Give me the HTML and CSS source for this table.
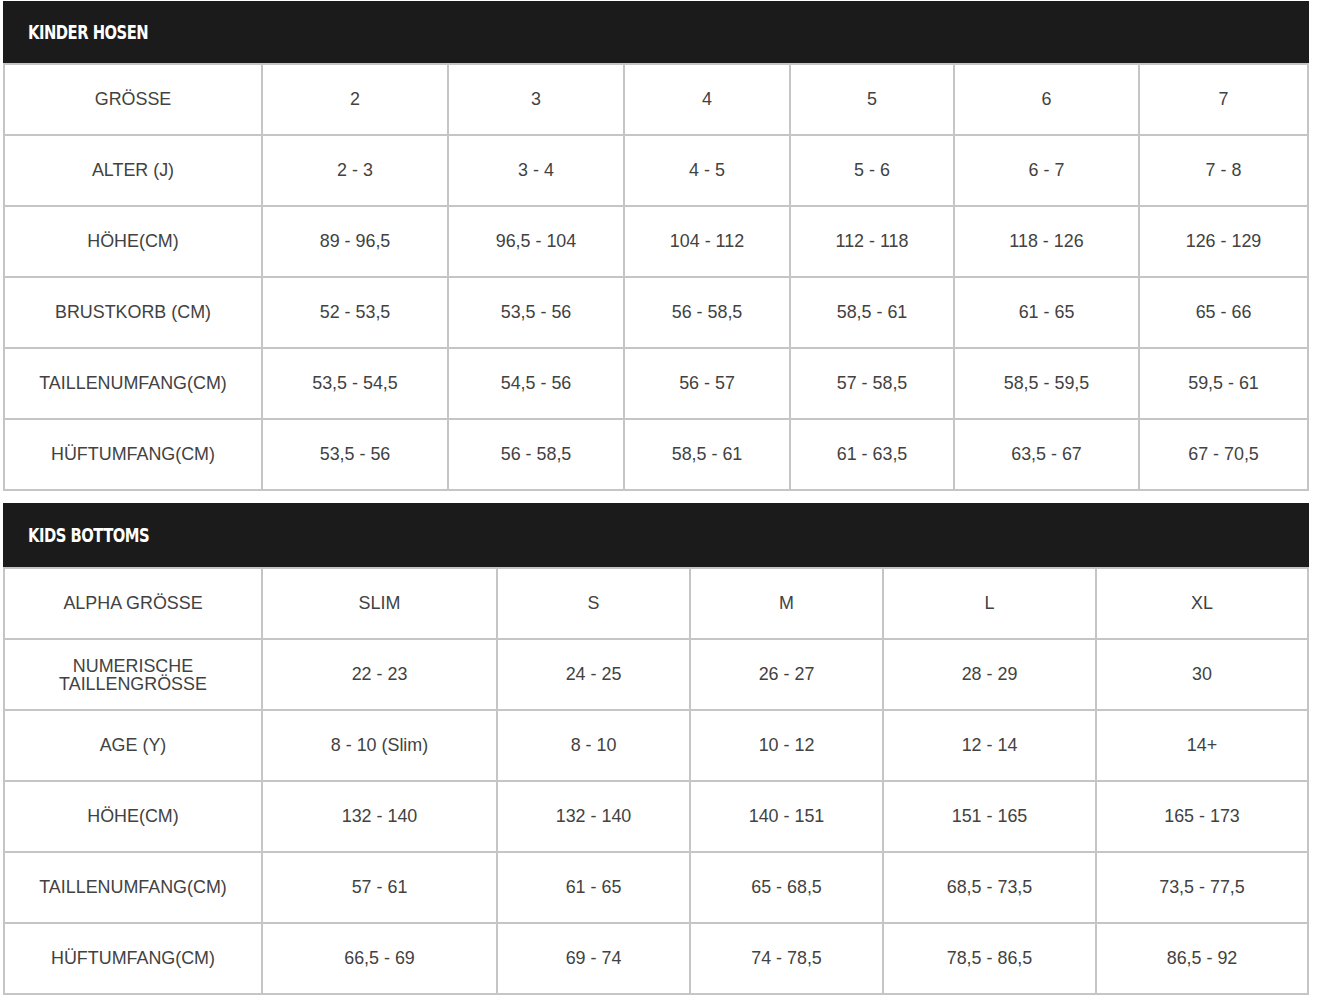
FILE: index.html
```html
<!DOCTYPE html>
<html lang="de">
<head>
<meta charset="utf-8">
<title>Kinder Hosen Größentabelle</title>
<link rel="stylesheet" href="styles.css">
</head>
<body>
<div class="page">
  <section class="chart">
    <div class="chart-head"><h2 class="chart-title">KINDER HOSEN</h2></div>
    <table class="grid">
      <colgroup>
        <col class="c-label"><col class="a1"><col class="a2"><col class="a3"><col class="a4"><col class="a5"><col class="a6">
      </colgroup>
      <tbody>
        <tr><td>GRÖSSE</td><td>2</td><td>3</td><td>4</td><td>5</td><td>6</td><td>7</td></tr>
        <tr><td>ALTER (J)</td><td>2 - 3</td><td>3 - 4</td><td>4 - 5</td><td>5 - 6</td><td>6 - 7</td><td>7 - 8</td></tr>
        <tr><td>HÖHE(CM)</td><td>89 - 96,5</td><td>96,5 - 104</td><td>104 - 112</td><td>112 - 118</td><td>118 - 126</td><td>126 - 129</td></tr>
        <tr><td>BRUSTKORB (CM)</td><td>52 - 53,5</td><td>53,5 - 56</td><td>56 - 58,5</td><td>58,5 - 61</td><td>61 - 65</td><td>65 - 66</td></tr>
        <tr><td>TAILLENUMFANG(CM)</td><td>53,5 - 54,5</td><td>54,5 - 56</td><td>56 - 57</td><td>57 - 58,5</td><td>58,5 - 59,5</td><td>59,5 - 61</td></tr>
        <tr><td>HÜFTUMFANG(CM)</td><td>53,5 - 56</td><td>56 - 58,5</td><td>58,5 - 61</td><td>61 - 63,5</td><td>63,5 - 67</td><td>67 - 70,5</td></tr>
      </tbody>
    </table>
  </section>

  <section class="chart chart-second">
    <div class="chart-head chart-head-tall"><h2 class="chart-title">KIDS BOTTOMS</h2></div>
    <table class="grid">
      <colgroup>
        <col class="c-label"><col class="b1"><col class="b2"><col class="b3"><col class="b4"><col class="b5">
      </colgroup>
      <tbody>
        <tr><td>ALPHA GRÖSSE</td><td>SLIM</td><td>S</td><td>M</td><td>L</td><td>XL</td></tr>
        <tr><td class="two-line">NUMERISCHE<br>TAILLENGRÖSSE</td><td>22 - 23</td><td>24 - 25</td><td>26 - 27</td><td>28 - 29</td><td>30</td></tr>
        <tr><td>AGE (Y)</td><td>8 - 10 (Slim)</td><td>8 - 10</td><td>10 - 12</td><td>12 - 14</td><td>14+</td></tr>
        <tr><td>HÖHE(CM)</td><td>132 - 140</td><td>132 - 140</td><td>140 - 151</td><td>151 - 165</td><td>165 - 173</td></tr>
        <tr><td>TAILLENUMFANG(CM)</td><td>57 - 61</td><td>61 - 65</td><td>65 - 68,5</td><td>68,5 - 73,5</td><td>73,5 - 77,5</td></tr>
        <tr><td>HÜFTUMFANG(CM)</td><td>66,5 - 69</td><td>69 - 74</td><td>74 - 78,5</td><td>78,5 - 86,5</td><td>86,5 - 92</td></tr>
      </tbody>
    </table>
  </section>
</div>
</body>
</html>
```

FILE: styles.css
```css
html, body {
  margin: 0;
  padding: 0;
  background: #ffffff;
}

.page {
  padding: 1px 0 0 3px;
  width: 1306px;
}

.chart-second {
  margin-top: 12px;
}

.chart-head {
  background: #1b1b1b;
  height: 62px;
  display: flex;
  align-items: center;
  padding-left: 25px;
}

.chart-head-tall {
  height: 64px;
}

.chart-title {
  margin: 0;
  color: #ffffff;
  font-family: "DejaVu Sans Condensed", "DejaVu Sans", sans-serif;
  font-weight: bold;
  font-size: 20px;
  letter-spacing: -0.6px;
  line-height: 1;
  transform: scaleX(0.82);
  transform-origin: left center;
  white-space: nowrap;
}

.grid {
  width: 1306px;
  table-layout: fixed;
  border-collapse: separate;
  border-spacing: 0;
  font-family: "Liberation Sans", Arial, sans-serif;
  font-size: 17.9px;
  color: #424242;
}

.grid td {
  height: 69px;
  padding: 0;
  text-align: center;
  vertical-align: middle;
  border-right: 2px solid #c5c5c5;
  border-bottom: 2px solid #c5c5c5;
  box-sizing: content-box;
  line-height: 1;
}

.grid tr:first-child td {
  border-top: 2px solid #c5c5c5;
}

.grid td:first-child {
  border-left: 2px solid #c5c5c5;
}

.grid .two-line {
  line-height: 18px;
}

.c-label { width: 260px; }

.a1 { width: 186px; }
.a2 { width: 176px; }
.a3 { width: 166px; }
.a4 { width: 164px; }
.a5 { width: 185px; }
.a6 { width: 169px; }

.b1 { width: 235px; }
.b2 { width: 193px; }
.b3 { width: 193px; }
.b4 { width: 213px; }
.b5 { width: 212px; }
```
